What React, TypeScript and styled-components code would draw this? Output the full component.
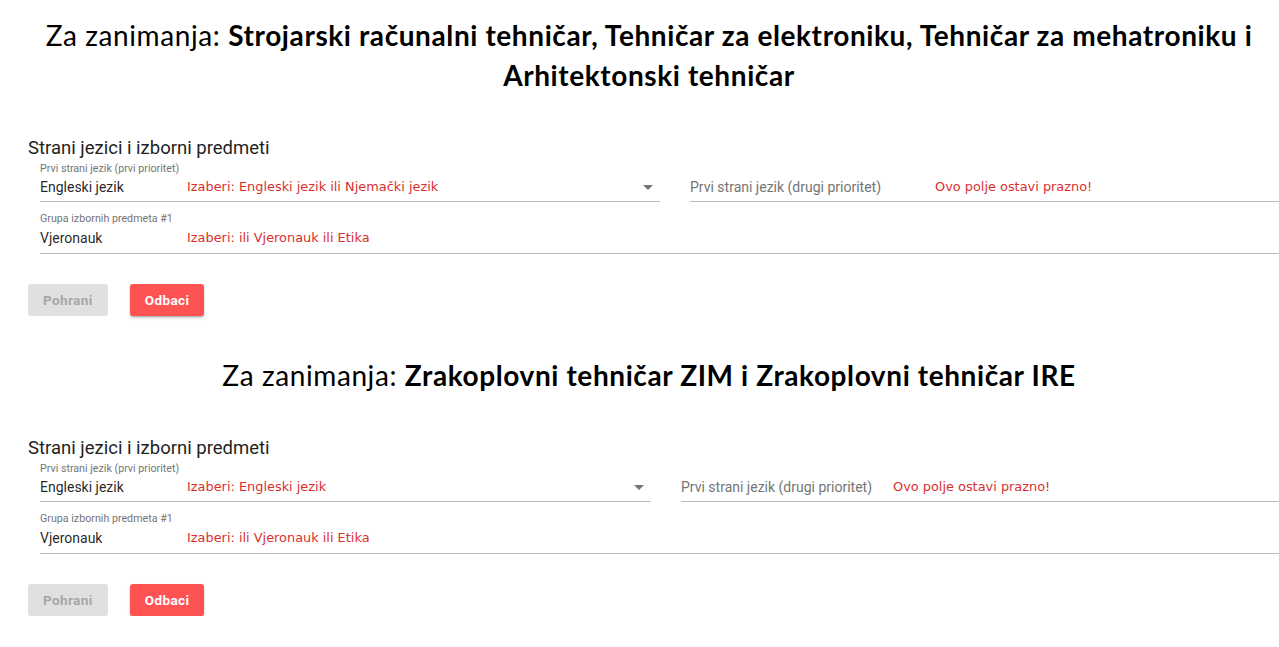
import React from 'react';
import styled, { createGlobalStyle } from 'styled-components';

const GlobalStyle = createGlobalStyle`
  body {
    margin: 0;
    background: #fff;
    font-family: Roboto, 'Liberation Sans', sans-serif;
  }
`;

const Page = styled.div`
  width: 1279px;
  overflow: hidden;
  padding-top: 15px;
`;

const Heading = styled.h1<{ gap?: number }>`
  margin: ${(p) => p.gap || 0}px 0 0;
  padding-left: 19px;
  text-align: center;
  font-family: Lato, 'Open Sans', sans-serif;
  font-weight: 400;
  font-size: 28px;
  letter-spacing: 0.6px;
  line-height: 40px;
  color: #000;
  b {
    font-weight: 700;
  }
`;

const Section = styled.section<{ top: number }>`
  padding: ${(p) => p.top}px 0 0 28px;
`;

const Title = styled.h2`
  margin: 0;
  font-size: 18.5px;
  font-weight: 400;
  line-height: 22px;
  color: #1f1f1f;
`;

const Fields = styled.div`
  padding-left: 12px;
  display: flex;
  flex-direction: column;
  gap: 10px;
  margin-top: 3px;
`;

const Row = styled.div`
  display: flex;
  gap: 30px;
`;

const Field = styled.div<{ width?: number }>`
  ${(p) => (p.width ? `width: ${p.width}px; flex: none;` : 'flex: 1;')}
  display: flex;
  flex-direction: column;
  border-bottom: 1px solid #bdbdbd;
  padding-bottom: 3px;
`;

const Label = styled.div`
  font-size: 10.7px;
  line-height: 14px;
  color: #757575;
  height: 14px;
`;

const Line = styled.div<{ tall?: boolean }>`
  display: flex;
  align-items: center;
  height: ${(p) => (p.tall ? 24 : 22)}px;
`;

const Value = styled.span<{ slot: number; muted?: boolean }>`
  width: ${(p) => p.slot}px;
  flex: none;
  font-size: 14px;
  color: ${(p) => (p.muted ? '#757575' : 'rgba(0, 0, 0, 0.87)')};
`;

const Hint = styled.span`
  flex: 1;
  font-family: 'DejaVu Sans', Verdana, sans-serif;
  font-size: 12.9px;
  color: #d9302f;
  margin-top: -2px;
`;

const Arrow = styled.span`
  width: 0;
  height: 0;
  margin-right: 7px;
  border-left: 5px solid transparent;
  border-right: 5px solid transparent;
  border-top: 5px solid #757575;
`;

const Buttons = styled.div`
  display: flex;
  gap: 22px;
  margin-top: 30px;
`;

const Button = styled.button<{ primary?: boolean }>`
  height: 32px;
  padding: 0 15px;
  border: none;
  border-radius: 3px;
  font-family: Roboto, sans-serif;
  font-size: 13.5px;
  font-weight: 700;
  letter-spacing: 0.4px;
  background: ${(p) => (p.primary ? '#ff5252' : '#e0e0e0')};
  color: ${(p) => (p.primary ? '#fff' : '#a6a6a6')};
  box-shadow: ${(p) =>
    p.primary
      ? '0 2px 3px rgba(0,0,0,0.2), 0 1px 1px rgba(0,0,0,0.14)'
      : 'none'};
`;

type FormProps = {
  top: number;
  firstWidth: number;
  firstHint: string;
  secondSlot: number;
};

const Form = ({ top, firstWidth, firstHint, secondSlot }: FormProps) => (
  <Section top={top}>
    <Title>Strani jezici i izborni predmeti</Title>
    <Fields>
      <Row>
        <Field width={firstWidth}>
          <Label>Prvi strani jezik (prvi prioritet)</Label>
          <Line>
            <Value slot={147}>Engleski jezik</Value>
            <Hint>{firstHint}</Hint>
            <Arrow />
          </Line>
        </Field>
        <Field>
          <Label />
          <Line>
            <Value slot={secondSlot} muted>
              Prvi strani jezik (drugi prioritet)
            </Value>
            <Hint>Ovo polje ostavi prazno!</Hint>
          </Line>
        </Field>
      </Row>
      <Row>
        <Field>
          <Label>Grupa izbornih predmeta #1</Label>
          <Line tall>
            <Value slot={147}>Vjeronauk</Value>
            <Hint>Izaberi: ili Vjeronauk ili Etika</Hint>
          </Line>
        </Field>
      </Row>
    </Fields>
    <Buttons>
      <Button disabled>Pohrani</Button>
      <Button primary>Odbaci</Button>
    </Buttons>
  </Section>
);

export default function App() {
  return (
    <Page>
      <GlobalStyle />
      <Heading>
        Za zanimanja:{' '}
        <b>
          Strojarski računalni tehničar, Tehničar za elektroniku, Tehničar za mehatroniku i
          <br />
          Arhitektonski tehničar
        </b>
      </Heading>
      <Form
        top={42}
        firstWidth={620}
        firstHint="Izaberi: Engleski jezik ili Njemački jezik"
        secondSlot={245}
      />
      <Heading gap={39}>
        Za zanimanja: <b>Zrakoplovni tehničar ZIM i Zrakoplovni tehničar IRE</b>
      </Heading>
      <Form
        top={42}
        firstWidth={611}
        firstHint="Izaberi: Engleski jezik"
        secondSlot={212}
      />
    </Page>
  );
}
